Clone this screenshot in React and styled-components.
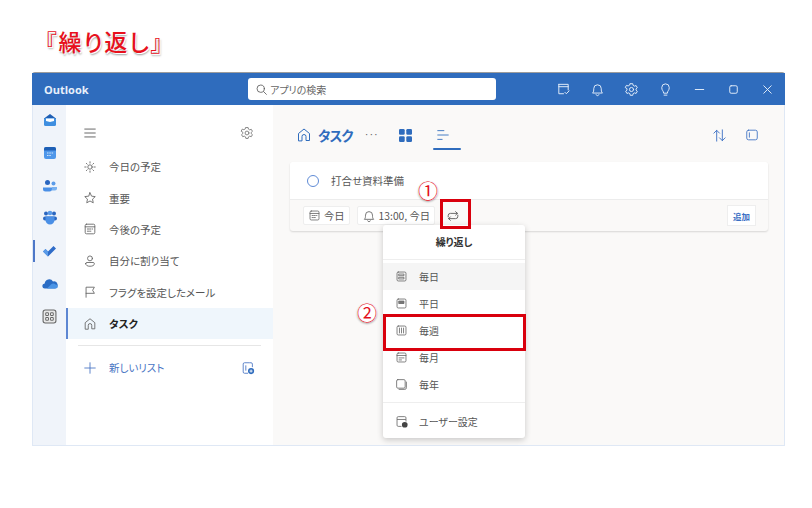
import React from "react";
import styled, { createGlobalStyle } from "styled-components";

const Global = createGlobalStyle`
  html, body { margin: 0; padding: 0; background: #fff; }
  body { font-family: "Noto Sans CJK JP", "Noto Sans", sans-serif; font-feature-settings: "palt" 1; }
`;

const Page = styled.div`
  position: relative;
  width: 812px;
  height: 508px;
  padding: 24px 0 0 32px;
  box-sizing: border-box;
  overflow: hidden;
`;
const Title = styled.h1`
  margin: 0 0 0 13px;
  height: 48px;
  font-size: 23px;
  line-height: 34px;
  font-weight: 500;
  color: #e8101c;
  letter-spacing: 1.9px;
  text-shadow: 1px 1px 0 #fff, 1px 2px 2px #9a9a9a;
`;
const Win = styled.div`
  width: 753px;
  height: 374px;
  display: flex;
  flex-direction: column;
  border-top: 1px solid #9c9c9c;
  box-sizing: border-box;
  border-radius: 3px 3px 0 0;
`;
const TitleBar = styled.header`
  height: 32px;
  flex: none;
  background: #2f6cbd;
  display: flex;
  align-items: center;
  position: relative;
  color: #fff;
`;
const Brand = styled.div`
  width: 216px;
  padding-left: 12px;
  box-sizing: border-box;
  font: 700 11px "Open Sans", sans-serif;
  color: #e8f0fb;
`;
const Search = styled.div`
  width: 248px;
  height: 22px;
  background: #fff;
  border-radius: 3px;
  display: flex;
  align-items: center;
  gap: 2px;
  padding-left: 7px;
  box-sizing: border-box;
  font-size: 10px;
  color: #666;
`;
const TopIcons = styled.div`
  margin-left: auto;
  display: flex;
  align-items: center;
  gap: 19px;
  padding-right: 10px;
  svg { display: block; }
`;
const Body = styled.div`
  flex: 1;
  display: flex;
  min-height: 0;
  border: 1px solid #dfe8f5;
  border-top: 0;
`;
const Rail = styled.nav`
  width: 33px;
  flex: none;
  background: #f0f4fa;
  display: flex;
  flex-direction: column;
  align-items: center;
  gap: 12.8px;
  padding-top: 5px;
  box-sizing: border-box;
`;
const RailItem = styled.div`
  position: relative;
  width: 33px;
  height: 20px;
  display: flex;
  align-items: center;
  justify-content: center;
  &::before {
    content: "";
    display: ${(p) => (p.$active ? "block" : "none")};
    position: absolute;
    left: 0;
    top: -1px;
    bottom: -1px;
    width: 2px;
    background: #4e78c8;
  }
`;
const Side = styled.aside`
  width: 207px;
  flex: none;
  background: #fff;
  display: flex;
  flex-direction: column;
  box-sizing: border-box;
`;
const SideTop = styled.div`
  height: 46px;
  padding: 10px 19px 0 17px;
  display: flex;
  align-items: center;
  justify-content: space-between;
  box-sizing: border-box;
`;
const NavRow = styled.div`
  position: relative;
  height: 31.4px;
  display: flex;
  align-items: center;
  padding-left: 17px;
  gap: 12px;
  font-size: 10.5px;
  color: ${(p) => (p.$active ? "#222" : "#555")};
  font-weight: ${(p) => (p.$active ? 700 : 400)};
  background: ${(p) => (p.$active ? "#eff6fc" : "transparent")};
  &::before {
    content: "";
    display: ${(p) => (p.$active ? "block" : "none")};
    position: absolute;
    left: 0;
    top: 0;
    bottom: 0;
    width: 2px;
    background: #5d86d2;
  }
  svg { flex: none; }
`;
const SideRule = styled.hr`
  margin: 6px 12px 6px 12px;
  border: 0;
  border-top: 1px solid #e6e6e6;
`;
const NewList = styled.div`
  height: 31px;
  padding: 0 18px 0 17px;
  display: flex;
  align-items: center;
  gap: 12px;
  font-size: 10.5px;
  color: #4a76c4;
  svg:last-child { margin-left: auto; }
`;
const Main = styled.main`
  flex: 1;
  position: relative;
  background: #faf9f8;
  padding: 0 16px 0 17px;
  box-sizing: border-box;
`;
const MainHead = styled.div`
  height: 56px;
  display: flex;
  align-items: center;
  padding: 4px 9px 0 6px;
  box-sizing: border-box;
  color: #2f6cbd;
`;
const MainTitle = styled.div`
  font-size: 13.5px;
  letter-spacing: -0.8px;
  font-weight: 700;
  margin-left: 6px;
`;
const Dots = styled.div`
  margin-left: 12px;
  font-size: 11px;
  color: #666;
  letter-spacing: 1px;
  font-family: "Liberation Sans", sans-serif;
  line-height: 12px;
  margin-top: -3px;
`;
const Tab = styled.div`
  position: relative;
  width: 28px;
  height: 30px;
  box-sizing: border-box;
  padding-right: ${(p) => (p.$active ? 8 : 0)}px;
  margin-left: ${(p) => p.$gap}px;
  display: flex;
  align-items: center;
  justify-content: center;
  &::after {
    content: "";
    display: ${(p) => (p.$active ? "block" : "none")};
    position: absolute;
    left: 0;
    right: 0;
    bottom: 0;
    height: 2px;
    background: #2f6cbd;
    border-radius: 1px;
  }
`;
const HeadRight = styled.div`
  margin-left: auto;
  display: flex;
  align-items: center;
  gap: 18px;
`;
const Card = styled.section`
  border-radius: 3px;
  box-shadow: 0 1px 2px rgba(0, 0, 0, 0.14);
  background: #faf9f8;
  margin-top: 1px;
`;
const CardTop = styled.div`
  height: 37px;
  background: #fff;
  border-bottom: 1px solid #ececec;
  display: flex;
  align-items: center;
  padding-left: 17px;
  gap: 12px;
  font-size: 10.5px;
  color: #555;
  border-radius: 3px 3px 0 0;
`;
const Circle = styled.span`
  width: 10px;
  height: 10px;
  border: 1.3px solid #5f8bd6;
  border-radius: 50%;
`;
const CardBottom = styled.div`
  height: 31px;
  display: flex;
  align-items: center;
  padding: 0 12px 0 13px;
  gap: 7px;
  font-size: 10.3px;
  color: #555;
`;
const Chip = styled.div`
  height: 17px;
  background: #fff;
  border: 1px solid #eeeeee;
  border-radius: 2px;
  display: flex;
  align-items: center;
  gap: ${(p) => (p.$tight ? 3 : 4)}px;
  padding: 0 ${(p) => (p.$tight ? 4 : 5)}px;
  white-space: nowrap;
`;
const RepeatSlot = styled.div`
  display: flex;
  align-items: center;
  padding-left: 4px;
`;
const AddBtn = styled.div`
  margin-left: auto;
  width: 29px;
  height: 21px;
  background: #fff;
  border: 1px solid #eee;
  box-sizing: border-box;
  display: flex;
  align-items: center;
  justify-content: center;
  font-size: 8.5px;
  font-weight: 700;
  color: #3b6fc4;
`;
const Menu = styled.div`
  position: absolute;
  left: 110px;
  top: 120px;
  width: 142px;
  height: 213px;
  background: #fff;
  border-radius: 3px;
  box-shadow: 0 2px 6px rgba(0, 0, 0, 0.2);
  display: flex;
  flex-direction: column;
  z-index: 2;
`;
const MenuTitle = styled.div`
  height: 35px;
  padding-bottom: 2px;
  box-sizing: border-box;
  border-bottom: 1px solid #eee;
  display: flex;
  align-items: center;
  justify-content: center;
  font-size: 10px;
  font-weight: 700;
  color: #333;
  margin-bottom: 3px;
  flex: none;
`;
const MenuRow = styled.div`
  height: ${(p) => p.$h || 27}px;
  flex: none;
  display: flex;
  align-items: center;
  padding-left: 12px;
  gap: 11px;
  font-size: 10px;
  color: #555;
  background: ${(p) => (p.$hover ? "#f5f5f5" : "transparent")};
`;
const MenuRule = styled.div`
  border-top: 1px solid #eee;
  margin-top: 4px;
`;
const RedBox = styled.div`
  position: absolute;
  left: ${(p) => p.$x}px;
  top: ${(p) => p.$y}px;
  width: ${(p) => p.$w}px;
  height: ${(p) => p.$h}px;
  border: 3px solid #d9000d;
  box-sizing: border-box;
  z-index: 3;
`;
const Badge = styled.div`
  position: absolute;
  left: ${(p) => p.$x}px;
  top: ${(p) => p.$y}px;
  width: 20px;
  height: 20px;
  border-radius: 50%;
  background: #fff;
  box-shadow: 0 1px 2px rgba(0, 0, 0, 0.3);
  display: flex;
  align-items: center;
  justify-content: center;
  font-size: 20px;
  line-height: 20px;
  color: #e3101c;
  z-index: 3;
`;

const I = ({ s = 14, c = "#666", w = 1, children }) => (
  <svg width={s} height={s} viewBox="0 0 16 16" fill="none" stroke={c} strokeWidth={w} strokeLinecap="round" strokeLinejoin="round">
    {children}
  </svg>
);
const Gear = (p) => (
  <I {...p}>
    <circle cx="8" cy="8" r="2.2" />
    <path d="M6.7 1.8h2.6l.4 1.8 1.4.8 1.8-.6 1.3 2.3-1.4 1.2v1.4l1.4 1.2-1.3 2.3-1.8-.6-1.4.8-.4 1.8H6.7l-.4-1.8-1.4-.8-1.8.6-1.3-2.3 1.4-1.2V7.1L1.3 5.9l1.3-2.3 1.8.6 1.4-.8z" />
  </I>
);
const Bell = (p) => (
  <I {...p}>
    <path d="M3 11.5c1-1 1-2.300 1-4.500a4 4 0 0 1 8 0c0 2.200 0 3.500 1 4.500z" />
    <path d="M6.500 13.500a1.600 1.600 0 0 0 3 0" />
  </I>
);
const Cal = (p) => (
  <I {...p}>
    <rect x="2.500" y="2.500" width="11" height="11" rx="1.500" />
    <path d="M2.500 5.500h11M5 8h1.500M7.500 8H9M10.500 8h.5M5 10.500h1.500M7.500 10.500H9" />
  </I>
);
const Home = (p) => (
  <I {...p}>
    <path d="M2.500 13.500V6.500L8 2l5.500 4.500v7h-3.500V9.500a2 2 0 0 0-4 0v4z" />
  </I>
);
const Repeat = (p) => (
  <I {...p}>
    <path d="M2.500 9V7.500A2.500 2.500 0 0 1 5 5h8M11 3l2 2-2 2M13.500 7v1.500a2.500 2.500 0 0 1-2.500 2.500H3M5 9l-2 2 2 2" />
  </I>
);

const Mail = () => (
  <svg width="16" height="16" viewBox="0 0 16 16">
    <path d="M2 6.500 8 2l6 4.500V7H2z" fill="#1f5fb4" />
    <rect x="2" y="6" width="12" height="8" rx="1.500" fill="#3f8fe0" />
    <path d="M4 6.500h8v2.500l-4 1-4-1z" fill="#fff" />
  </svg>
);
const CalIcon = () => (
  <svg width="14" height="14" viewBox="0 0 14 14">
    <rect x="1" y="1" width="12" height="12" rx="2" fill="#4f97ea" />
    <path d="M1 3a2 2 0 0 1 2-2h8a2 2 0 0 1 2 2v1.500H1z" fill="#1e5fb5" />
    <path d="M4 7h1.500M6.300 7h1.500M8.600 7h1.500M4 9.500h1.500M6.300 9.500h1.500" stroke="#cfe3fa" strokeWidth="1" />
  </svg>
);
const People = () => (
  <svg width="16" height="14" viewBox="0 0 16 14">
    <circle cx="5.500" cy="3.500" r="2.500" fill="#2a66c0" />
    <circle cx="11.500" cy="4.500" r="2" fill="#5b9be8" />
    <path d="M1 8.500h9v1.500a2.500 2.500 0 0 1-2.500 2.500h-4A2.500 2.500 0 0 1 1 10z" fill="#4a8fe6" />
    <path d="M10 8h5v1.500A2 2 0 0 1 13 11.500h-3z" fill="#79b1f0" />
  </svg>
);
const Teams = () => (
  <svg width="16" height="16" viewBox="0 0 16 16">
    <circle cx="4" cy="3.500" r="2" fill="#2a66c0" />
    <circle cx="12" cy="3.500" r="2" fill="#2a66c0" />
    <circle cx="8" cy="3" r="2.300" fill="#5b9be8" />
    <rect x="1" y="6.500" width="14" height="4" rx="2" fill="#2a66c0" />
    <path d="M3.500 6.500h9V10a4.500 4.500 0 0 1-9 0z" fill="#4a8fe6" />
  </svg>
);
const Check = () => (
  <svg width="15" height="13" viewBox="0 0 15 13">
    <path d="M1 6.500 3.500 4l2.500 2.500L11.500 1 14 3.500 6 11.500z" fill="#2f6cc8" />
    <path d="M1 6.500 3.500 4l2.500 2.500v5z" fill="#5b9be8" />
  </svg>
);
const Cloud = () => (
  <svg width="16" height="11" viewBox="0 0 16 11">
    <path d="M3 10.500a2.500 2.500 0 0 1-.3-5A4.500 4.500 0 0 1 11 3.500a3.500 3.500 0 0 1 2 7z" fill="#2a6cc4" />
    <path d="M5 10.500 9 6.500a3 3 0 0 1 4.500 0 2 2 0 0 1 .5 4z" fill="#4b94e6" />
  </svg>
);
const Apps = () => (
  <svg width="15" height="15" viewBox="0 0 14 14" fill="none" stroke="#666" strokeWidth="1">
    <rect x="1" y="1" width="12" height="12" rx="2" fill="#e8e8e8" />
    <rect x="3.500" y="3.500" width="2.500" height="2.500" rx=".7" fill="#fff" />
    <rect x="8" y="3.500" width="2.500" height="2.500" rx=".7" fill="#fff" />
    <rect x="3.500" y="8" width="2.500" height="2.500" rx=".7" fill="#fff" />
    <rect x="8" y="8" width="2.500" height="2.500" rx=".7" fill="#fff" />
  </svg>
);

const navItems = [
  ["今日の予定", <I><circle cx="8" cy="8" r="2.500" /><path d="M8 2v1.500M8 12.500V14M2 8h1.500M12.500 8H14M3.800 3.800l1 1M11.200 11.200l1 1M3.800 12.200l1-1M11.200 4.800l1-1" /></I>],
  ["重要", <I><path d="M8 2l1.800 3.900 4.200.5-3.100 2.900.8 4.200L8 11.400l-3.700 2.100.8-4.200L2 6.400l4.200-.5z" /></I>],
  ["今後の予定", <Cal />],
  ["自分に割り当て", <I><circle cx="8" cy="5" r="2.800" /><path d="M3 11a1.500 1.500 0 0 1 1.500-1.300h7A1.500 1.500 0 0 1 13 11c0 2-2 3-5 3s-5-1-5-3z" /></I>],
  ["フラグを設定したメール", <I><path d="M3.500 14V2.500h9.500L11 6l2 3.500H3.500" /></I>],
];

const menuItems = [
  ["毎日", <><rect x="2.500" y="2.500" width="11" height="11" rx="1.500" /><rect x="5" y="5" width="6" height="2" /><rect x="5" y="9" width="6" height="2" /></>, true],
  ["平日", <><rect x="2.500" y="2.500" width="11" height="11" rx="1.500" /><rect x="5" y="5" width="6" height="3" fill="#777" /></>],
  ["毎週", <><rect x="2.500" y="2.500" width="11" height="11" rx="1.500" /><path d="M5.500 5v6M8 5v6M10.500 5v6" /></>],
  ["毎月", <><rect x="2.500" y="2.500" width="11" height="11" rx="1.500" /><path d="M2.500 5.500h11M5 8.500h6M5 11h3" /></>],
  ["毎年", <><rect x="2" y="2" width="10.500" height="10.500" rx="1.500" /><path d="M14 5v7a2 2 0 0 1-2 2H5" /></>],
];

export default function App() {
  return (
    <Page>
      <Global />
      <Title>『繰り返し』</Title>
      <Win>
        <TitleBar>
          <Brand>Outlook</Brand>
          <Search>
            <I s={13} c="#555"><circle cx="7" cy="7" r="4.500" /><path d="M10.500 10.500 14 14" /></I>
            アプリの検索
          </Search>
          <TopIcons>
            <I s={15} c="#e8f0fb"><path d="M3 2.500h10v6M3 2.500v10h5M3 5h10M9.500 11l1.500 1.500 3-3" /></I>
            <Bell s={15} c="#e8f0fb" />
            <Gear s={15} c="#e8f0fb" />
            <I s={15} c="#e8f0fb"><path d="M6 11.500c0-2-2-2.500-2-5.500a4 4 0 0 1 8 0c0 3-2 3.500-2 5.500zM6.500 14h3" /></I>
            <I s={15} c="#e8f0fb"><path d="M3.500 8h9" /></I>
            <I s={15} c="#e8f0fb"><rect x="4" y="4" width="8" height="8" rx="1.500" /></I>
            <I s={15} c="#e8f0fb"><path d="M4 4l8 8M12 4l-8 8" /></I>
          </TopIcons>
        </TitleBar>
        <Body>
          <Rail>
            <RailItem><Mail /></RailItem>
            <RailItem><CalIcon /></RailItem>
            <RailItem><People /></RailItem>
            <RailItem><Teams /></RailItem>
            <RailItem $active><Check /></RailItem>
            <RailItem><Cloud /></RailItem>
            <RailItem><Apps /></RailItem>
          </Rail>
          <Side>
            <SideTop>
              <I s={14} c="#555"><path d="M2 3.500h12M2 8h12M2 12.500h12" /></I>
              <Gear s={14} c="#777" />
            </SideTop>
            {navItems.map(([t, ic]) => (
              <NavRow key={t}>{ic}{t}</NavRow>
            ))}
            <NavRow $active><Home c="#666" />タスク</NavRow>
            <SideRule />
            <NewList>
              <I s={14} c="#4a76c4"><path d="M8 2v12M2 8h12" /></I>
              新しいリスト
              <svg width="14" height="14" viewBox="0 0 16 16" fill="none">
                <path d="M10 2H4a1.500 1.500 0 0 0-1.500 1.500v9A1.500 1.500 0 0 0 4 14h4" stroke="#4a76c4" />
                <path d="M10 2h1.500A1.500 1.500 0 0 1 13 3.500V7M5.500 5v6" stroke="#4a76c4" />
                <circle cx="11.500" cy="11.500" r="3.500" fill="#2f6cbd" />
                <path d="M11.500 9.700v3.600M9.700 11.500h3.600" stroke="#fff" />
              </svg>
            </NewList>
          </Side>
          <Main>
            <MainHead>
              <Home s={16} c="#2f6cbd" />
              <MainTitle>タスク</MainTitle>
              <Dots>···</Dots>
              <Tab $gap={13}>
                <svg width="13" height="13" viewBox="0 0 13 13" fill="#2f6cbd">
                  <rect x="0" y="0" width="5.700" height="5.700" rx="1.200" />
                  <rect x="7.300" y="0" width="5.700" height="5.700" rx="1.200" />
                  <rect x="0" y="7.300" width="5.700" height="5.700" rx="1.200" />
                  <rect x="7.300" y="7.300" width="5.700" height="5.700" rx="1.200" />
                </svg>
              </Tab>
              <Tab $gap={13} $active>
                <I s={14} c="#2f6cbd"><path d="M2 3h7M2 8h12M2 13h5" /></I>
              </Tab>
              <HeadRight>
                <I s={15} c="#3f72c4"><path d="M5 14V2.500M2 5.500l3-3 3 3M11 2v11.500M8 10.500l3 3 3-3" /></I>
                <I s={14} c="#3f72c4"><rect x="2" y="2.500" width="12" height="11" rx="2" /><path d="M5 5.500v5" /></I>
              </HeadRight>
            </MainHead>
            <Card>
              <CardTop><Circle />打合せ資料準備</CardTop>
              <CardBottom>
                <Chip $tight><Cal s={13} c="#666" />今日</Chip>
                <Chip $tight><Bell s={14} c="#666" />13:00, 今日</Chip>
                <RepeatSlot><Repeat s={14} c="#555" /></RepeatSlot>
                <AddBtn>追加</AddBtn>
              </CardBottom>
            </Card>
            <Menu>
              <MenuTitle>繰り返し</MenuTitle>
              {menuItems.map(([t, ic, h]) => (
                <MenuRow key={t} $hover={h}><I s={13} c="#666">{ic}</I>{t}</MenuRow>
              ))}
              <MenuRule />
              <MenuRow $h={36}>
                <svg width="13" height="13" viewBox="0 0 16 16" fill="none">
                  <path d="M8 14H4a1.500 1.500 0 0 1-1.500-1.500v-9A1.500 1.500 0 0 1 4 2h8a1.500 1.500 0 0 1 1.500 1.500V8M2.500 5.500h11" stroke="#666" />
                  <circle cx="12" cy="12" r="3.500" fill="#444" />
                </svg>
                ユーザー設定
              </MenuRow>
            </Menu>
          </Main>
        </Body>
      </Win>
      <RedBox $x={440} $y={199} $w={31} $h={30} />
      <RedBox $x={383} $y={314} $w={143} $h={37} />
      <Badge $x={418} $y={181}>①</Badge>
      <Badge $x={357} $y={303}>②</Badge>
    </Page>
  );
}
